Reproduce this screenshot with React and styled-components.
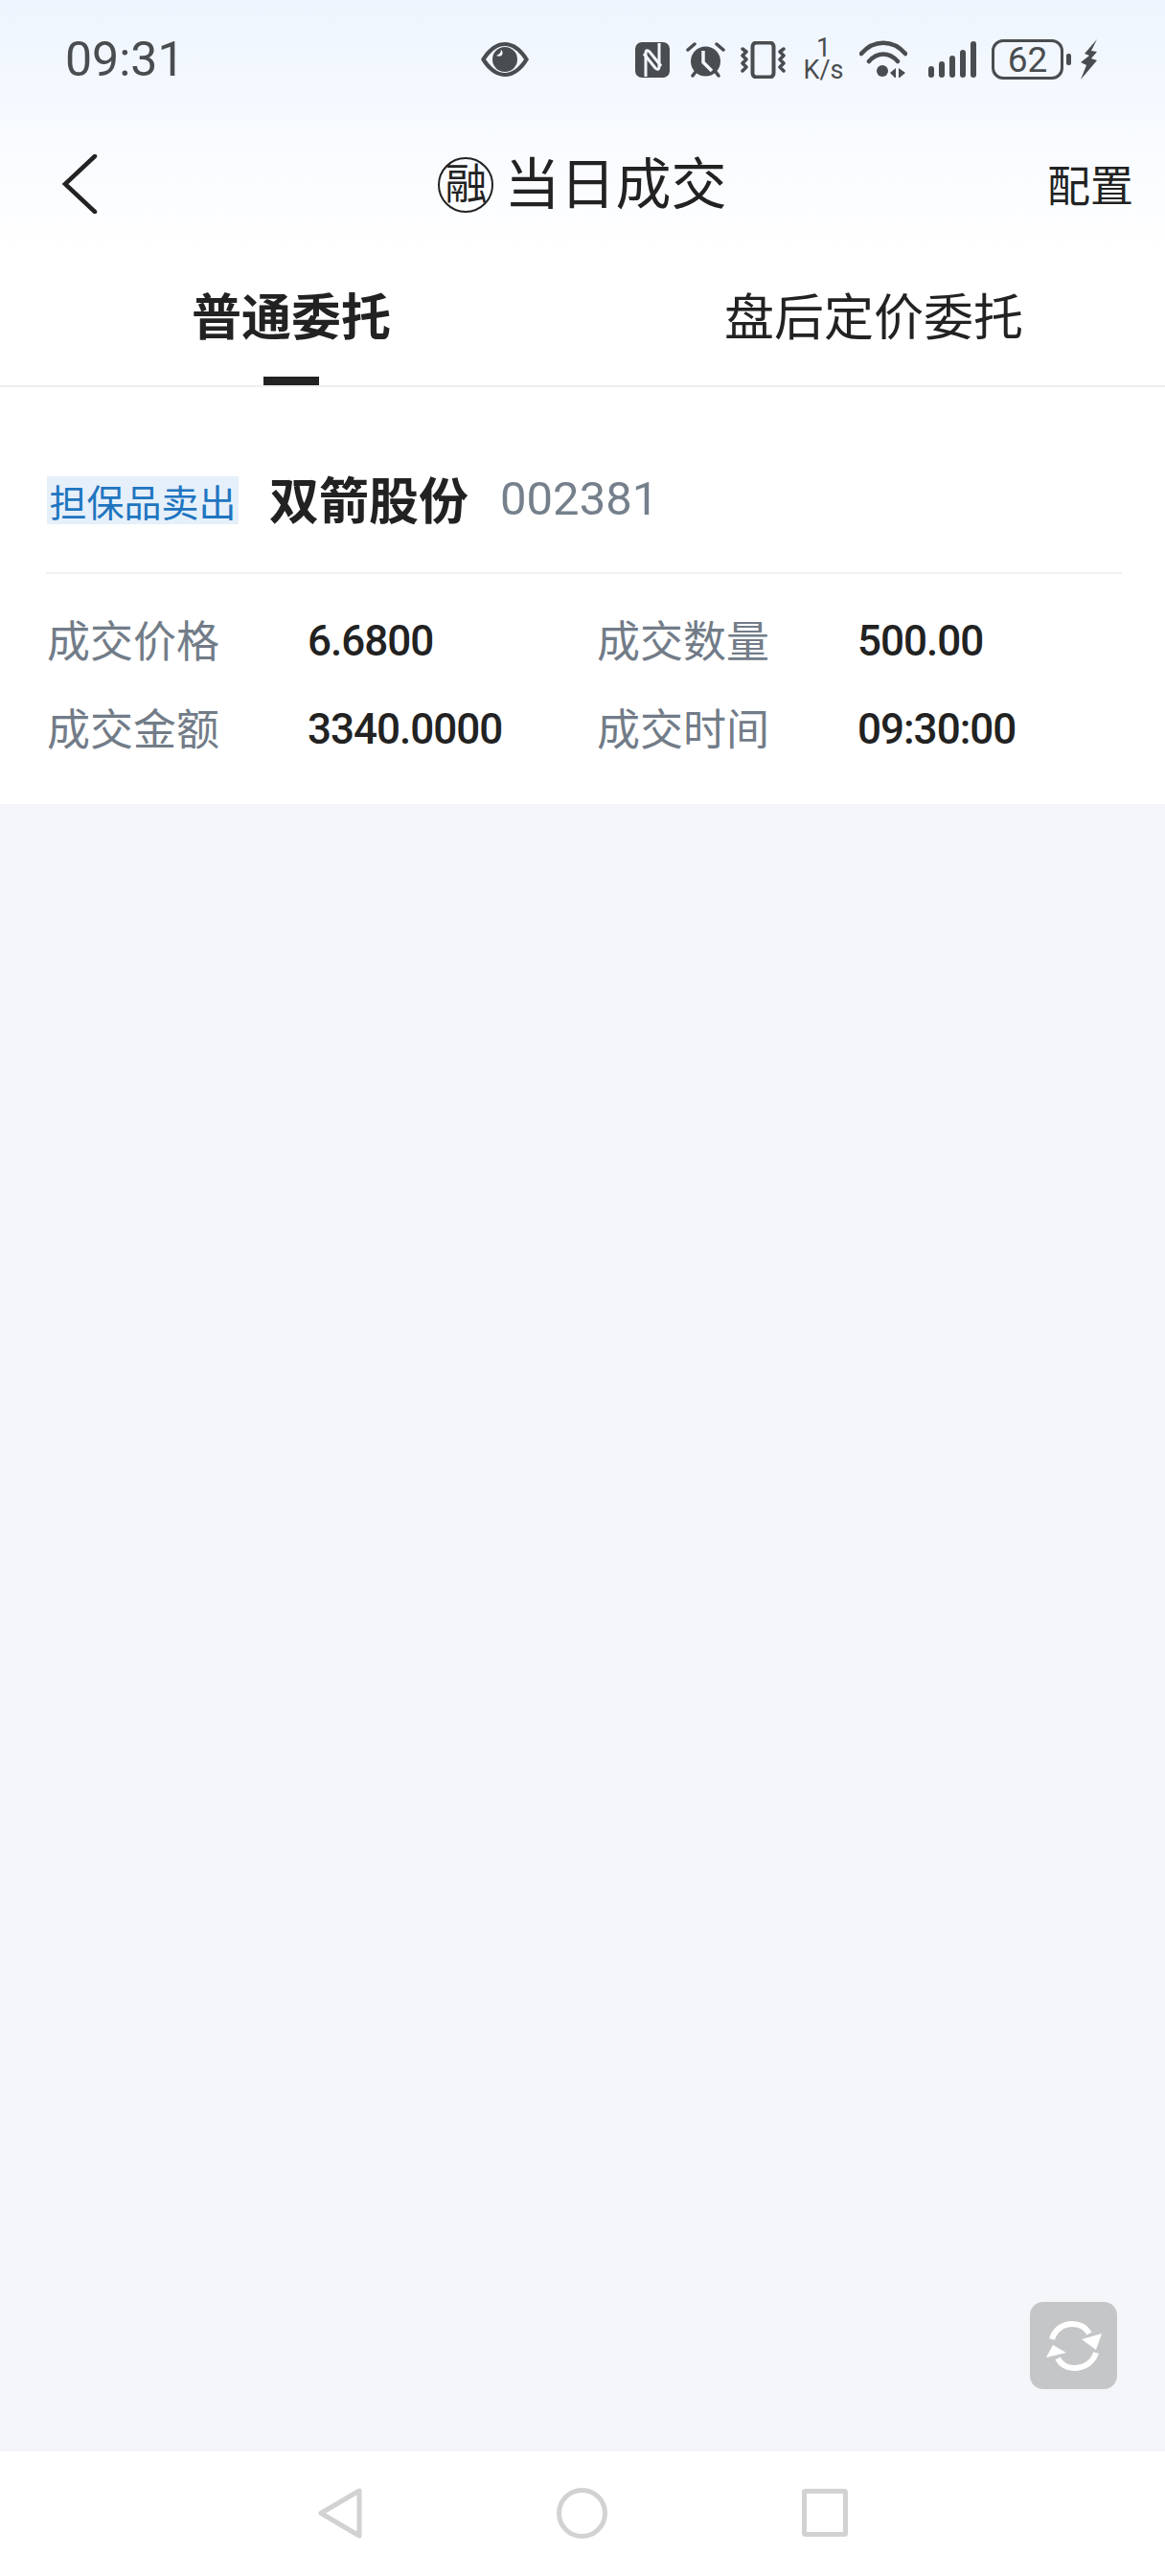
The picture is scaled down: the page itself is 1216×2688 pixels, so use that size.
import React from "react";
import styled, { createGlobalStyle } from "styled-components";

const dealFields = [
  { label: "成交价格", value: "6.6800" },
  { label: "成交数量", value: "500.00" },
  { label: "成交金额", value: "3340.0000" },
  { label: "成交时间", value: "09:30:00" },
];

const EyeIcon = () => (
  <StatusSvg $w={52} $mr={110} viewBox="0 0 52 38">
    <path d="M1 19C8 7 17 1 26 1s18 6 25 18c-7 12-16 18-25 18S8 31 1 19z" fill="#4a4d50" />
    <path d="M6 19C12 10 19 5 26 5s14 5 20 14c-6 9-13 14-20 14S12 28 6 19z" fill="#f2f7fe" />
    <circle cx="26" cy="19" r="13" fill="#4a4d50" />
    <path d="M17 15c3-1 5-3 5-6 3 2 2 9-5 6z" fill="#f2f7fe" />
  </StatusSvg>
);

const NfcIcon = () => (
  <StatusSvg $w={36} $mr={17} viewBox="0 0 36 37">
    <rect width="36" height="37" rx="7" fill="#4a4d50" />
    <path d="M11 36V12c0-4 2-4 4-2l12 15" fill="none" stroke="#f2f7fe" strokeWidth="3" />
    <path d="M25 1v24c0 4-2 4-4 2L9 12" fill="none" stroke="#f2f7fe" strokeWidth="3" />
  </StatusSvg>
);

const AlarmIcon = () => (
  <StatusSvg $w={41} $mr={16} viewBox="0 0 41 38">
    <circle cx="20.5" cy="21" r="15.5" fill="#4a4d50" />
    <path d="M2 9l7-6M39 9l-7-6M7 36l3-4M34 36l-3-4" stroke="#4a4d50" strokeWidth="3.5" strokeLinecap="round" />
    <path d="M18 10v12l9 9" fill="none" stroke="#f2f7fe" strokeWidth="3.5" />
  </StatusSvg>
);

const VibrateIcon = () => (
  <StatusSvg $w={47} $mr={19} viewBox="0 0 47 39">
    <rect x="12.5" y="1.5" width="22" height="36" rx="4" fill="none" stroke="#4a4d50" strokeWidth="4" />
    <path
      d="M2 8l4 3-4 4 4 4-4 4 4 4-4 4M45 8l-4 3 4 4-4 4 4 4-4 4 4 4"
      fill="none"
      stroke="#4a4d50"
      strokeWidth="3.500"
      strokeLinecap="round"
      strokeLinejoin="round"
    />
  </StatusSvg>
);

const WifiIcon = () => (
  <StatusSvg $w={50} $mr={22} viewBox="0 0 50 40">
    <path
      d="M2 14C15 -1 35 -1 48 14M10 22C19 12 31 12 40 22"
      fill="none"
      stroke="#4a4d50"
      strokeWidth="4.5"
      strokeLinecap="round"
    />
    <circle cx="24" cy="32" r="6" fill="#4a4d50" />
    <path d="M38 29v10h-1l-5-5zM41 29v10h1l6-5z" fill="#4a4d50" />
  </StatusSvg>
);

const SignalIcon = () => (
  <StatusSvg $w={50} $mr={16} viewBox="0 0 50 38">
    <rect x="0" y="26" width="6" height="12" rx="3" fill="#4a4d50" />
    <rect x="11" y="21" width="6" height="17" rx="3" fill="#4a4d50" />
    <rect x="22" y="15" width="6" height="23" rx="3" fill="#4a4d50" />
    <rect x="33" y="9" width="6" height="29" rx="3" fill="#4a4d50" />
    <rect x="44" y="0" width="6" height="38" rx="3" fill="#4a4d50" />
  </StatusSvg>
);

const BoltIcon = () => (
  <StatusSvg $w={18} $mr={0} viewBox="0 0 18 42">
    <path d="M18 0L5 15l5 2-9 7 6 3-6 15L18 22l-6-2 6-7-6-1z" fill="#4a4d50" />
  </StatusSvg>
);

const RefreshIcon = () => (
  <svg width="58" height="52" viewBox="0 0 58 52">
    <path d="M6 19C9 9 17 3 27 3c8 0 14 3 18 10" fill="none" stroke="#fff" strokeWidth="6" />
    <path d="M58 13L52 30 37 19z" fill="#fff" />
    <path d="M52 33c-3 10-12 16-23 16-8 0-13-3-17-10" fill="none" stroke="#fff" strokeWidth="6" />
    <path d="M0 38L7 25l14 8z" fill="#fff" />
  </svg>
);

const App = () => {
  return (
    <Page>
      <GlobalStyle />
      <Header>
        <StatusBar>
          <Clock>09:31</Clock>
          <StatusIcons>
            <EyeIcon />
            <NfcIcon />
            <AlarmIcon />
            <VibrateIcon />
            <NetSpeed>
              <span>1</span>
              <span>K/s</span>
            </NetSpeed>
            <WifiIcon />
            <SignalIcon />
            <Battery>62</Battery>
            <BatteryTip />
            <BoltIcon />
          </StatusIcons>
        </StatusBar>
        <NavRow>
          <BackButton width="40" height="62" viewBox="0 0 40 62">
            <path d="M35 2L4 31l31 29" fill="none" stroke="#222" strokeWidth="4.5" strokeLinecap="round" />
          </BackButton>
          <Title>
            <MarginBadge>融</MarginBadge>
            当日成交
          </Title>
          <ConfigLink>配置</ConfigLink>
        </NavRow>
      </Header>

      <Tabs>
        <Tab $active>
          普通委托
          <TabMark />
        </Tab>
        <Tab>盘后定价委托</Tab>
      </Tabs>

      <DealCard>
        <DealHead>
          <SideTag>担保品卖出</SideTag>
          <StockName>双箭股份</StockName>
          <StockCode>002381</StockCode>
        </DealHead>
        <FieldGrid>
          {dealFields.map((field) => (
            <Field key={field.label}>
              <FieldLabel>{field.label}</FieldLabel>
              <FieldValue>{field.value}</FieldValue>
            </Field>
          ))}
        </FieldGrid>
      </DealCard>

      <EmptyArea>
        <RefreshButton>
          <RefreshIcon />
        </RefreshButton>
      </EmptyArea>

      <SystemNav>
        <svg width="46" height="53" viewBox="0 0 46 53">
          <path d="M43 3v47L3 26.500z" fill="none" stroke="#d2d2d2" strokeWidth="5" strokeLinejoin="round" />
        </svg>
        <svg width="53" height="53" viewBox="0 0 53 53">
          <circle cx="26.500" cy="26.500" r="24" fill="none" stroke="#d2d2d2" strokeWidth="5" />
        </svg>
        <svg width="48" height="50" viewBox="0 0 48 50">
          <rect x="2.500" y="2.500" width="43" height="45" rx="1" fill="none" stroke="#d2d2d2" strokeWidth="5" />
        </svg>
      </SystemNav>
    </Page>
  );
};

export default App;

const GlobalStyle = createGlobalStyle`
  html, body {
    margin: 0;
    padding: 0;
    background: #f4f6fa;
  }
  * {
    box-sizing: border-box;
  }
`;

const Page = styled.div`
  width: 1216px;
  height: 2688px;
  display: flex;
  flex-direction: column;
  font-family: Roboto, "Noto Sans CJK SC", sans-serif;
  color: #222;
  overflow: hidden;
`;

const Header = styled.header`
  height: 260px;
  background: linear-gradient(180deg, #eef5fe 0%, #f7faff 50%, #ffffff 100%);
`;

const StatusBar = styled.div`
  height: 124px;
  display: flex;
  align-items: center;
  justify-content: space-between;
  padding: 0 71px 0 68px;
`;

const Clock = styled.span`
  font-size: 50px;
  color: #4a4d50;
`;

const StatusIcons = styled.div`
  display: flex;
  align-items: center;
`;

const StatusSvg = styled.svg`
  width: ${(p) => p.$w}px;
  margin-right: ${(p) => p.$mr}px;
  flex-shrink: 0;
`;

const NetSpeed = styled.div`
  width: 41px;
  margin-right: 17px;
  display: flex;
  flex-direction: column;
  align-items: center;
  font-size: 27px;
  line-height: 23px;
  color: #4a4d50;
`;

const Battery = styled.div`
  width: 75px;
  height: 42px;
  border: 3.5px solid #4a4d50;
  border-radius: 12px;
  display: flex;
  align-items: center;
  justify-content: center;
  font-size: 37px;
  color: #4a4d50;
`;

const BatteryTip = styled.div`
  width: 5px;
  height: 12px;
  margin: 0 9px 0 3px;
  border-radius: 2px;
  background: #4a4d50;
`;

const NavRow = styled.nav`
  height: 136px;
  padding: 0 33px;
  display: grid;
  grid-template-columns: 1fr auto 1fr;
  align-items: center;
`;

const BackButton = styled.svg`
  display: block;
  margin-left: 31px;
`;

const Title = styled.h1`
  margin: 0;
  display: flex;
  align-items: center;
  gap: 11px;
  padding-top: 2px;
  font-size: 58px;
  line-height: 76px;
  font-weight: 400;
`;

const MarginBadge = styled.span`
  width: 58px;
  height: 58px;
  border: 2.5px solid #222;
  border-radius: 50%;
  display: flex;
  align-items: center;
  justify-content: center;
  font-size: 44px;
  line-height: 1;
  font-weight: 400;
`;

const ConfigLink = styled.span`
  justify-self: end;
  padding-bottom: 2px;
  font-size: 45px;
`;

const Tabs = styled.div`
  height: 144px;
  display: grid;
  grid-template-columns: 1fr 1fr;
  background: #fff;
  border-bottom: 2px solid #eeeeee;
`;

const Tab = styled.div`
  position: relative;
  display: flex;
  align-items: center;
  justify-content: center;
  padding-bottom: 8px;
  font-size: 52px;
  font-weight: ${(p) => (p.$active ? 700 : 400)};
`;

const TabMark = styled.span`
  position: absolute;
  left: 50%;
  bottom: 0;
  width: 58px;
  height: 9px;
  margin-left: -29px;
  background: #222;
`;

const DealCard = styled.section`
  height: 435px;
  padding: 0 45px 0 48px;
  background: #fff;
`;

const DealHead = styled.div`
  height: 195px;
  padding: 43px 1px 0;
  display: flex;
  align-items: center;
  border-bottom: 2px solid #f0f0f0;
`;

const SideTag = styled.span`
  height: 50px;
  width: 200px;
  margin-right: 32px;
  display: flex;
  align-items: center;
  justify-content: center;
  background: #e6f0fa;
  color: #1f75c0;
  font-size: 39px;
`;

const StockName = styled.span`
  margin-right: 33px;
  margin-bottom: 6px;
  font-size: 52px;
  font-weight: 700;
`;

const StockCode = styled.span`
  margin-bottom: 3px;
  font-size: 49px;
  color: #75808c;
`;

const FieldGrid = styled.div`
  padding: 24px 1px 0;
  display: grid;
  grid-template-columns: 574px 1fr;
  grid-auto-rows: 92px;
`;

const Field = styled.div`
  display: flex;
  align-items: center;
`;

const FieldLabel = styled.span`
  width: 272px;
  padding-bottom: 5px;
  font-size: 45px;
  color: #727c88;
`;

const FieldValue = styled.span`
  font-size: 44px;
  font-weight: 500;
  letter-spacing: -1px;
`;

const EmptyArea = styled.main`
  flex: 1;
  position: relative;
  background: #f4f6fa;
`;

const RefreshButton = styled.div`
  position: absolute;
  right: 50px;
  bottom: 65px;
  width: 91px;
  height: 91px;
  border-radius: 14px;
  background: #c4c6c8;
  display: flex;
  align-items: center;
  justify-content: center;
`;

const SystemNav = styled.footer`
  height: 130px;
  padding-bottom: 2px;
  background: #fff;
  display: flex;
  align-items: center;
  justify-content: center;
  gap: 203px;
`;
